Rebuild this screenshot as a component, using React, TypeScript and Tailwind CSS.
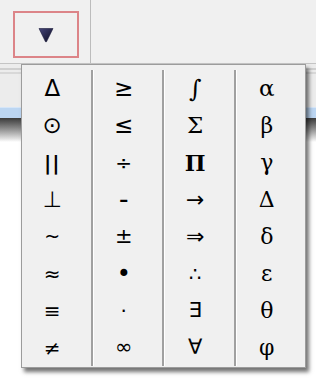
type Cell = { ch: string; font?: 'sans' | 'serif'; size?: string };

// symbol palette, column by column
const columns: Cell[][] = [
  [
    { ch: 'Δ', size: 'text-[23px]' },
    { ch: '⊙', size: 'text-[23px]' },
    { ch: '||', size: 'text-[20px] font-semibold tracking-[1px]' },
    { ch: '⊥', size: 'text-[22px]' },
    { ch: '~', size: 'text-[19px]' },
    { ch: '≈', size: 'text-[20px]' },
    { ch: '≡', size: 'text-[20px]' },
    { ch: '≠', size: 'text-[20px]' },
  ],
  [
    { ch: '≥', size: 'text-[23px]' },
    { ch: '≤', size: 'text-[23px]' },
    { ch: '÷', size: 'text-[20px]' },
    { ch: '–', size: 'text-[18px] font-bold' },
    { ch: '±', size: 'text-[21px]' },
    { ch: '•', size: 'text-[24px]' },
    { ch: '·', size: 'text-[20px]' },
    { ch: '∞', size: 'text-[21px]' },
  ],
  [
    { ch: '∫', font: 'serif', size: 'text-[24px]' },
    { ch: 'Σ', font: 'serif', size: 'text-[23px]' },
    { ch: 'Π', font: 'serif', size: 'text-[22px] font-bold' },
    { ch: '→', size: 'text-[22px]' },
    { ch: '⇒', size: 'text-[22px]' },
    { ch: '∴', size: 'text-[20px]' },
    { ch: '∃', size: 'text-[21px]' },
    { ch: '∀', size: 'text-[21px]' },
  ],
  [
    { ch: 'α', font: 'serif', size: 'text-[23px]' },
    { ch: 'β', font: 'serif', size: 'text-[22px]' },
    { ch: 'γ', font: 'serif', size: 'text-[22px]' },
    { ch: 'Δ', font: 'serif', size: 'text-[22px]' },
    { ch: 'δ', font: 'serif', size: 'text-[22px]' },
    { ch: 'ε', font: 'serif', size: 'text-[22px]' },
    { ch: 'θ', font: 'serif', size: 'text-[22px]' },
    { ch: 'φ', font: 'serif', size: 'text-[22px]' },
  ],
];

export default function App() {
  return (
    <div className="relative w-[316px] h-[381px] overflow-hidden bg-white font-['DejaVu_Sans',sans-serif]">
      {/* toolbar */}
      <div className="flex h-[64px] bg-[#f0f0f0] border-b border-[#c4c4c4]">
        <div className="w-[91px] border-r border-[#bcbcbc] pl-[13px] pt-[11px]">
          <button className="w-[66px] h-[47px] border-2 border-[#dc8488] flex items-center justify-center pt-[1px]">
            <svg width="16" height="16" viewBox="0 0 16 16">
              <defs>
                <linearGradient id="tri" x1="0" y1="0" x2="1" y2="1">
                  <stop offset="0" stopColor="#46467a" />
                  <stop offset="1" stopColor="#0a0a20" />
                </linearGradient>
              </defs>
              <path
                d="M1 1.5 L15 1.5 L8.6 14.6 Q8 15.6 7.4 14.6 Z"
                fill="url(#tri)"
                stroke="#1a1a3a"
                strokeWidth="0.6"
                strokeLinejoin="round"
              />
            </svg>
          </button>
        </div>
        <div className="flex-1" />
      </div>

      {/* window behind the menu */}
      <div className="h-[43px] bg-[#ececec] pt-[4px]">
        <div className="h-[2px] bg-[#cfcfcf]" />
        <div className="h-[2px] mt-[2px] bg-[#d8d8d8]" />
      </div>
      <div className="h-[11px] bg-[#bcd6f2] border-t border-[#d6e6f8]" />
      <div className="h-[24px] bg-gradient-to-b from-[#3c3c3c] to-white" />

      {/* symbol menu */}
      <div className="absolute left-[21px] top-[64px] w-[285px] h-[304px] bg-[#f0f0f0] border border-[#9c9c9c] shadow-[3px_4px_4px_rgba(0,0,0,0.55)] pt-[5px] pb-[1px] flex">
        {columns.map((col, i) => (
          <div
            key={i}
            className={
              i < 3
                ? 'flex-1 flex flex-col border-r-2 border-[#a0a0a0] shadow-[1px_0_0_#ffffff] mr-[1px]'
                : 'flex-1 flex flex-col'
            }
          >
            {col.map((c, j) => (
              <div
                key={j}
                className={
                  'h-[37px] flex items-center justify-center pr-[8px] text-black leading-none ' +
                  (c.size ?? 'text-[22px]') +
                  (c.font === 'serif' ? " font-['DejaVu_Serif',serif]" : '')
                }
              >
                {c.ch}
              </div>
            ))}
          </div>
        ))}
      </div>
    </div>
  );
}
